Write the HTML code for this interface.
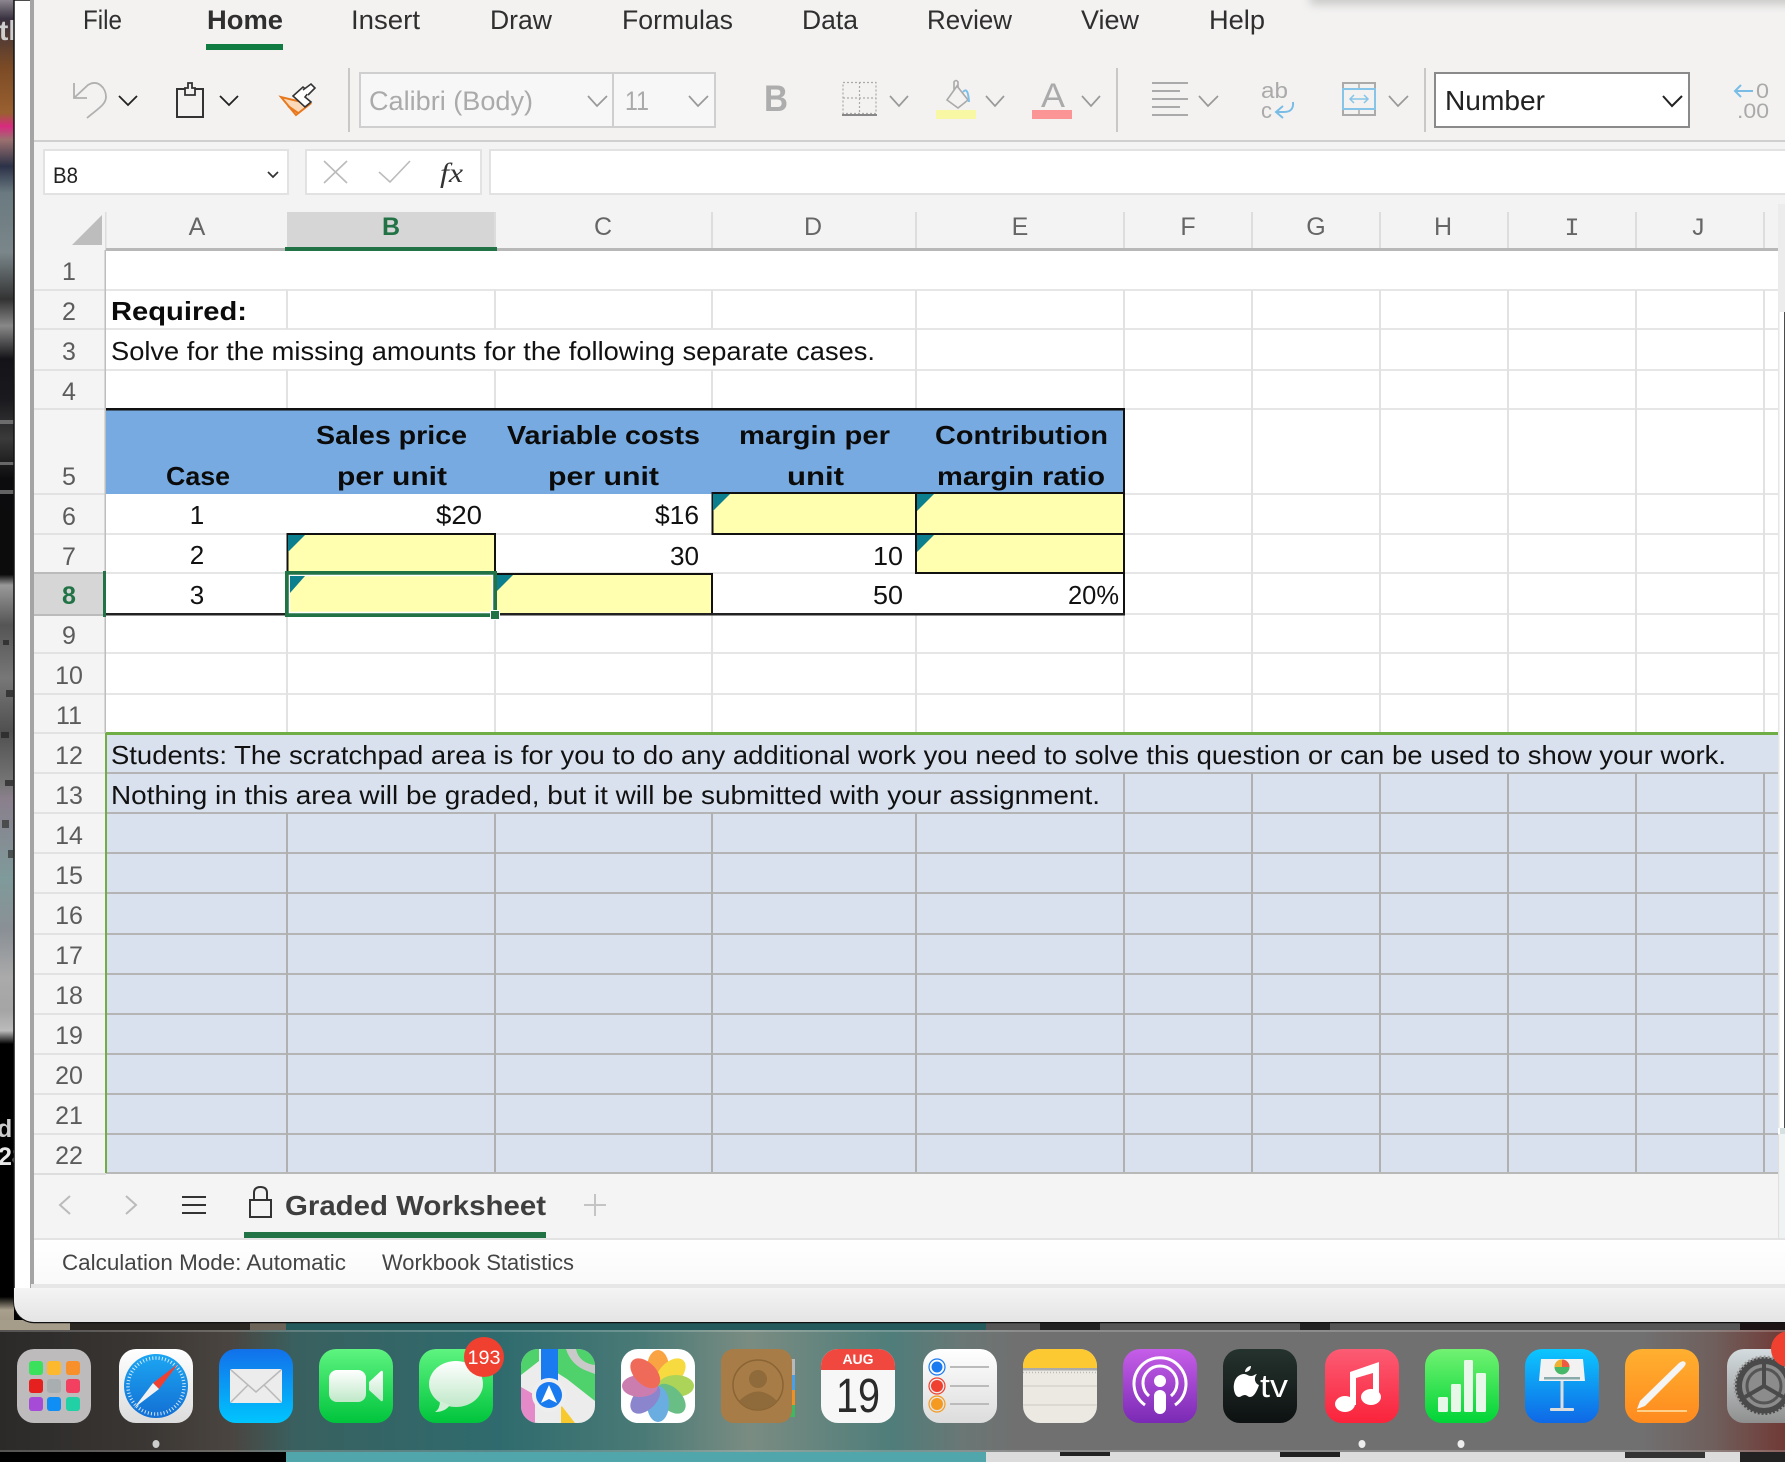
<!DOCTYPE html>
<html lang="en"><head><meta charset="utf-8"><title>Graded Worksheet</title>
<style>
html,body{margin:0;padding:0;background:#000;width:1785px;height:1462px;overflow:hidden}
svg{display:block}
text{font-family:"Liberation Sans",sans-serif}
.t{fill:#111;font-size:26px}
.b{fill:#0b0b0b;font-size:26px;font-weight:bold}
.r{fill:#5c5c5c;font-size:25px;text-anchor:middle}
.c{fill:#666;font-size:25px;text-anchor:middle}
.m{fill:#2f2f2f;font-size:27px}
.g{fill:#aaa;font-size:27px}
.ch{fill:none;stroke:#999;stroke-width:1.7}
.tri{fill:#0c7f8f}
</style></head><body>
<svg width="1785" height="1462" viewBox="0 0 1785 1462" xmlns="http://www.w3.org/2000/svg">
<defs>
<linearGradient id="leftbg" x1="0" y1="0" x2="0" y2="1">
<stop offset="0" stop-color="#8c8790"/><stop offset=".014" stop-color="#3a3240"/><stop offset=".05" stop-color="#7a4a25"/><stop offset=".085" stop-color="#9a6030"/><stop offset=".095" stop-color="#d82a80"/><stop offset=".105" stop-color="#9c7070"/><stop offset=".125" stop-color="#2c3248"/><stop offset=".145" stop-color="#6a7a80"/><stop offset=".19" stop-color="#7a868a"/><stop offset=".225" stop-color="#333"/><stop offset=".245" stop-color="#888"/><stop offset=".27" stop-color="#141418"/><stop offset=".30" stop-color="#1a1a1e"/><stop offset=".33" stop-color="#3a3a3a"/><stop offset=".36" stop-color="#0c0c0e"/><stop offset=".432" stop-color="#0c0c0c"/><stop offset=".44" stop-color="#999"/><stop offset=".47" stop-color="#555"/><stop offset=".51" stop-color="#777"/><stop offset=".55" stop-color="#505050"/><stop offset=".59" stop-color="#777"/><stop offset=".6" stop-color="#8a7f8c"/><stop offset=".66" stop-color="#7f9a9a"/><stop offset=".70" stop-color="#8a9096"/><stop offset=".735" stop-color="#aaa"/><stop offset=".76" stop-color="#a5a5a5"/><stop offset=".775" stop-color="#bbb"/><stop offset=".785" stop-color="#000"/><stop offset=".975" stop-color="#000"/><stop offset=".985" stop-color="#a89f8c"/><stop offset="1" stop-color="#9a9080"/>
</linearGradient>
<linearGradient id="dock" x1="0" y1="0" x2="1785" y2="0" gradientUnits="userSpaceOnUse">
<stop offset="0" stop-color="#2b2a29"/><stop offset=".08" stop-color="#3a3633"/><stop offset=".13" stop-color="#4a4540"/><stop offset=".165" stop-color="#39605f"/><stop offset=".28" stop-color="#2f6b6e"/><stop offset=".36" stop-color="#4a7a76"/><stop offset=".42" stop-color="#7a8c82"/><stop offset=".5" stop-color="#4f7d7a"/><stop offset=".54" stop-color="#6a7775"/><stop offset=".57" stop-color="#707070"/><stop offset=".92" stop-color="#707070"/><stop offset=".96" stop-color="#6f5f5c"/><stop offset="1" stop-color="#703a36"/>
</linearGradient>
<linearGradient id="foot" x1="0" y1="0" x2="0" y2="1"><stop offset="0" stop-color="#f4f4f4"/><stop offset="1" stop-color="#e4e4e4"/></linearGradient>
<linearGradient id="stat" x1="0" y1="0" x2="0" y2="1"><stop offset="0" stop-color="#fff"/><stop offset="1" stop-color="#f9f9f9"/></linearGradient>
<linearGradient id="iWhite" x1="0" y1="0" x2="0" y2="1"><stop offset="0" stop-color="#fff"/><stop offset="1" stop-color="#dcdcdc"/></linearGradient>
<linearGradient id="iSaf" x1="0" y1="0" x2="0" y2="1"><stop offset="0" stop-color="#1ca6f2"/><stop offset="1" stop-color="#136fd4"/></linearGradient>
<linearGradient id="iMail" x1="0" y1="0" x2="0" y2="1"><stop offset="0" stop-color="#1270ea"/><stop offset="1" stop-color="#00c5fe"/></linearGradient>
<linearGradient id="iGreen" x1="0" y1="0" x2="0" y2="1"><stop offset="0" stop-color="#5ef480"/><stop offset="1" stop-color="#00c43c"/></linearGradient>
<linearGradient id="iBub" x1="0" y1="0" x2="0" y2="1"><stop offset="0" stop-color="#fff"/><stop offset="1" stop-color="#bfe8c8"/></linearGradient>
<linearGradient id="iPod" x1="0" y1="0" x2="0" y2="1"><stop offset="0" stop-color="#c65ee8"/><stop offset="1" stop-color="#7a2ab5"/></linearGradient>
<linearGradient id="iTv" x1="0" y1="0" x2="0" y2="1"><stop offset="0" stop-color="#25332e"/><stop offset="1" stop-color="#0d1111"/></linearGradient>
<linearGradient id="iMus" x1="0" y1="0" x2="0" y2="1"><stop offset="0" stop-color="#fb5c74"/><stop offset="1" stop-color="#fa233b"/></linearGradient>
<linearGradient id="iNum" x1="0" y1="0" x2="0" y2="1"><stop offset="0" stop-color="#72f272"/><stop offset="1" stop-color="#00d436"/></linearGradient>
<linearGradient id="iKey" x1="0" y1="0" x2="0" y2="1"><stop offset="0" stop-color="#0dc6fe"/><stop offset="1" stop-color="#0f68e6"/></linearGradient>
<linearGradient id="iPag" x1="0" y1="0" x2="0" y2="1"><stop offset="0" stop-color="#ffb030"/><stop offset="1" stop-color="#ff8a1e"/></linearGradient>
<linearGradient id="iSys" x1="0" y1="0" x2="0" y2="1"><stop offset="0" stop-color="#d4dcdf"/><stop offset="1" stop-color="#8f8f8f"/></linearGradient>
<filter id="blur6" x="-10%" y="-200%" width="120%" height="500%"><feGaussianBlur stdDeviation="5"/></filter>
<clipPath id="winclip"><path d="M14 0H1785V1322H34A20 20 0 0 1 14 1302Z"/></clipPath>
</defs>

<!-- desktop backdrop -->
<rect width="1785" height="1462" fill="#000"/>
<rect x="0" y="0" width="14" height="1330" fill="url(#leftbg)"/>
<g fill="#888" opacity=".7">
<rect x="0" y="420" width="14" height="4"/><rect x="0" y="462" width="14" height="3"/><rect x="0" y="490" width="14" height="4"/>
<rect x="3" y="640" width="6" height="5" fill="#222"/><rect x="6" y="690" width="7" height="7" fill="#222"/><rect x="1" y="732" width="8" height="6" fill="#222"/><rect x="5" y="780" width="8" height="6" fill="#222"/><rect x="2" y="820" width="7" height="8" fill="#333"/><rect x="8" y="850" width="5" height="8" fill="#333"/>
</g>
<text x="-1" y="40" style="font-size:28px;font-weight:bold" fill="#cfcfcf">tl</text>
<text x="-3" y="1137" style="font-size:25px;font-weight:bold" fill="#ccc">d</text>
<text x="-2" y="1165" style="font-size:25px;font-weight:bold" fill="#e8e8e8">28</text>

<!-- strip between window and dock -->
<rect x="0" y="1320" width="286" height="12" fill="#2a2622"/>
<rect x="0" y="1320" width="70" height="12" fill="#a59c8a"/>
<rect x="250" y="1320" width="36" height="12" fill="#6c6458"/>
<rect x="286" y="1320" width="700" height="12" fill="#245a5c"/>
<rect x="986" y="1320" width="799" height="12" fill="#555"/>
<rect x="1040" y="1320" width="60" height="12" fill="#222"/>
<rect x="1300" y="1320" width="30" height="12" fill="#222"/>
<rect x="1740" y="1320" width="45" height="12" fill="#1c1414"/>
<!-- strip below dock -->
<rect x="286" y="1452" width="700" height="10" fill="#50a6aa"/>
<rect x="986" y="1452" width="799" height="10" fill="#dcdcdc"/>
<rect x="1060" y="1452" width="50" height="4" fill="#222"/>
<rect x="1280" y="1452" width="60" height="5" fill="#222"/>
<rect x="1625" y="1452" width="80" height="6" fill="#333"/>
<rect x="1740" y="1452" width="45" height="10" fill="#222"/>

<!-- dock -->
<rect x="0" y="1330" width="1785" height="122" fill="url(#dock)"/>
<rect x="0" y="1330" width="1785" height="2" fill="#fff" opacity=".2"/>
<rect x="0" y="1450" width="1785" height="2" fill="#fff" opacity=".2"/>
<ellipse cx="156" cy="1444" rx="3.5" ry="4" fill="#ccc"/>
<ellipse cx="1362" cy="1444" rx="3.5" ry="4" fill="#eee"/>
<ellipse cx="1461" cy="1444" rx="3.5" ry="4" fill="#eee"/>

<!-- launchpad -->
<g transform="translate(17 1349)">
<rect width="74" height="74" rx="17" fill="#bdbbbb"/>
<rect x="12" y="12" width="14" height="14" rx="3" fill="#3be05c"/><rect x="30" y="12" width="14" height="14" rx="3" fill="#fdb92e"/><rect x="49" y="12" width="14" height="14" rx="3" fill="#f7902a"/>
<rect x="12" y="30" width="14" height="14" rx="3" fill="#e61f1f"/><rect x="30" y="30" width="14" height="14" rx="3" fill="#a9aeb1"/><rect x="49" y="30" width="14" height="14" rx="3" fill="#f33f60"/>
<rect x="12" y="48" width="14" height="14" rx="3" fill="#a64bd8"/><rect x="30" y="48" width="14" height="14" rx="3" fill="#0f8ef5"/><rect x="49" y="48" width="14" height="14" rx="3" fill="#22d0a6"/>
</g>
<!-- safari -->
<g transform="translate(119 1349)">
<rect width="74" height="74" rx="17" fill="url(#iWhite)"/>
<circle cx="37" cy="37" r="32" fill="url(#iSaf)"/>
<circle cx="37" cy="37" r="28" fill="none" stroke="#fff" stroke-width="3.5" stroke-dasharray="1 2.2" opacity=".8"/>
<path d="M34 34 L59 15 L40 40Z" fill="#f04030"/>
<path d="M34 34 L15 59 L40 40Z" fill="#f2f2f2"/>
</g>
<!-- mail -->
<g transform="translate(219 1349)">
<rect width="74" height="74" rx="17" fill="url(#iMail)"/>
<rect x="11" y="20" width="52" height="34" rx="2" fill="#ececec"/>
<path d="M12 21 L37 43 L62 21 M12 53 L29 36 M62 53 L45 36" fill="none" stroke="#b9b9b9" stroke-width="1.5"/>
</g>
<!-- facetime -->
<g transform="translate(319 1349)">
<rect width="74" height="74" rx="17" fill="url(#iGreen)"/>
<rect x="10" y="21" width="37" height="32" rx="8" fill="url(#iBub)"/>
<path d="M50 33 L62 22 Q64 21 64 24 V50 Q64 53 62 52 L50 41Z" fill="url(#iBub)"/>
</g>
<!-- messages -->
<g transform="translate(419 1349)">
<rect width="74" height="74" rx="17" fill="url(#iGreen)"/>
<ellipse cx="37" cy="35" rx="27" ry="23" fill="url(#iBub)"/>
<path d="M21 52 Q21 60 16 63 Q26 63 31 56Z" fill="#d0efd6"/>
</g>
<circle cx="484" cy="1357" r="20" fill="#f04030"/>
<text x="484" y="1364" text-anchor="middle" fill="#fff" style="font-size:19px" textLength="33" lengthAdjust="spacingAndGlyphs">193</text>
<!-- maps -->
<g transform="translate(521 1349)">
<clipPath id="mapc"><rect width="74" height="74" rx="17"/></clipPath>
<g clip-path="url(#mapc)">
<rect width="74" height="74" fill="#ececec"/>
<path d="M30 0H74V52L46 30 30 20Z" fill="#4fd26b"/>
<path d="M0 0H18V12L0 26Z" fill="#4fd26b"/>
<path d="M0 38L14 46V74H0Z" fill="#e58ac8"/>
<path d="M40 56L54 74H40Z" fill="#f8c92e"/>
<path d="M45 0 Q50 16 66 22 L74 25 V16 Q58 14 55 0Z" fill="#c9c9c9"/>
<rect x="20" y="0" width="17" height="34" fill="#1a7bf0"/>
<circle cx="28" cy="46" r="17" fill="#eee"/>
<circle cx="28" cy="46" r="13" fill="#1a7bf0"/>
<path d="M28 36 L36 54 L28 50 L20 54Z" fill="#fff"/>
</g></g>
<!-- photos -->
<g transform="translate(621 1349)">
<rect width="74" height="74" rx="17" fill="#fff"/>
<g transform="translate(37 37)" opacity=".9">
<ellipse cx="0" cy="-18" rx="11" ry="18" fill="#f99a2e"/>
<ellipse cx="0" cy="-18" rx="11" ry="18" fill="#f6d72c" transform="rotate(45)"/>
<ellipse cx="0" cy="-18" rx="11" ry="18" fill="#a4d048" transform="rotate(90)"/>
<ellipse cx="0" cy="-18" rx="11" ry="18" fill="#58b878" transform="rotate(135)"/>
<ellipse cx="0" cy="-18" rx="11" ry="18" fill="#5aa5dd" transform="rotate(180)"/>
<ellipse cx="0" cy="-18" rx="11" ry="18" fill="#7f78c8" transform="rotate(225)"/>
<ellipse cx="0" cy="-18" rx="11" ry="18" fill="#c670a8" transform="rotate(270)"/>
<ellipse cx="0" cy="-18" rx="11" ry="18" fill="#ee5a48" transform="rotate(315)"/>
</g></g>
<!-- contacts -->
<g transform="translate(721 1349)">
<rect x="60" y="10" width="14" height="16" fill="#b9b9b9"/><rect x="60" y="26" width="14" height="15" fill="#4aa0e8"/><rect x="60" y="41" width="14" height="15" fill="#f09020"/><rect x="60" y="56" width="14" height="12" fill="#40b860"/>
<rect width="71" height="74" rx="13" fill="#a87c46"/>
<circle cx="37" cy="36" r="25" fill="none" stroke="#8a6434" stroke-width="1.5"/>
<circle cx="37" cy="30" r="9" fill="#8f6a3a"/>
<path d="M18 52 Q37 33 56 52 A25 25 0 0 1 18 52Z" fill="#8f6a3a"/>
</g>
<!-- calendar -->
<g transform="translate(821 1349)">
<rect width="74" height="74" rx="17" fill="#f7f7f7"/>
<path d="M0 21V17A17 17 0 0 1 17 0H57A17 17 0 0 1 74 17V21Z" fill="#f0483e"/>
<text x="37" y="15" text-anchor="middle" fill="#fff" style="font-size:14px;font-weight:bold">AUG</text>
<text x="37" y="63" text-anchor="middle" fill="#2a2a2a" style="font-size:48px" textLength="44" lengthAdjust="spacingAndGlyphs">19</text>
</g>
<!-- reminders -->
<g transform="translate(923 1349)">
<rect width="74" height="74" rx="17" fill="url(#iWhite)"/>
<circle cx="14" cy="18" r="6" fill="#1a7bf0" stroke="#fff" stroke-width="1"/><circle cx="14" cy="18" r="8" fill="none" stroke="#1a7bf0" stroke-width="1.2"/>
<circle cx="14" cy="37" r="6" fill="#f04030"/><circle cx="14" cy="37" r="8" fill="none" stroke="#f04030" stroke-width="1.2"/>
<circle cx="14" cy="55" r="6" fill="#f59a20"/><circle cx="14" cy="55" r="8" fill="none" stroke="#f59a20" stroke-width="1.2"/>
<path d="M27 18H66M27 37H66M27 55H66" stroke="#bbb" stroke-width="2"/>
</g>
<!-- notes -->
<g transform="translate(1023 1349)">
<rect width="74" height="74" rx="17" fill="#ece9e3"/>
<path d="M0 19V17A17 17 0 0 1 17 0H57A17 17 0 0 1 74 17V19Z" fill="#fdc933"/>
<rect y="19" width="74" height="2.500" fill="#aaa"/>
<path d="M0 23.500H74" stroke="#bbb" stroke-width="1.500" stroke-dasharray="1 2"/>
<path d="M0 37H74M0 56H74" stroke="#d6d3cd" stroke-width="1.500"/>
</g>
<!-- podcasts -->
<g transform="translate(1123 1349)">
<rect width="74" height="74" rx="17" fill="url(#iPod)"/>
<g fill="none" stroke="#fff" stroke-width="3"><path d="M22 56A26 26 0 1 1 52 56"/><path d="M26 47A17 17 0 1 1 48 47"/></g>
<circle cx="37" cy="32" r="6" fill="#fff"/>
<rect x="31" y="41" width="12" height="24" rx="6" fill="#fff"/>
</g>
<!-- tv -->
<g transform="translate(1223 1349)">
<rect width="74" height="74" rx="17" fill="url(#iTv)"/>
<path d="M21 25C24 25 25 27 28 27C31 27 32 25 34 25C31 28 31 34 36 36C34 42 31 48 27 48C25 48 24 46 22 46C19 46 18 48 16 48C12 48 10 40 11 35C12 28 17 25 21 25ZM22 23C22 20 25 17 28 17C28 21 25 23 22 23Z" fill="#fff"/>
<text x="37" y="48" fill="#fff" style="font-size:32px" textLength="28" lengthAdjust="spacingAndGlyphs">tv</text>
</g>
<!-- music -->
<g transform="translate(1325 1349)">
<rect width="74" height="74" rx="17" fill="url(#iMus)"/>
<path d="M25 23L54 13V48H48V24L31 29V56H25Z" fill="#fff"/>
<ellipse cx="20" cy="55" rx="10" ry="8" fill="#fff"/><ellipse cx="46" cy="48" rx="10" ry="8" fill="#fff"/>
</g>
<!-- numbers -->
<g transform="translate(1425 1349)">
<rect width="74" height="74" rx="17" fill="url(#iNum)"/>
<rect x="13" y="48" width="10" height="15" rx="1.500" fill="#e8f8e8"/><rect x="26" y="35" width="10" height="28" rx="1.500" fill="#e8f8e8"/><rect x="39" y="11" width="9" height="52" rx="1.500" fill="#e8f8e8"/><rect x="51" y="24" width="10" height="39" rx="1.500" fill="#e8f8e8"/>
</g>
<!-- keynote -->
<g transform="translate(1525 1349)">
<rect width="74" height="74" rx="17" fill="url(#iKey)"/>
<path d="M16 10H58L60 32H14Z" fill="#f2f2f2"/>
<rect x="19" y="28" width="36" height="2.500" fill="#8aa"/>
<circle cx="37" cy="18" r="7.500" fill="#46b868"/><path d="M37 18V10.500A7.500 7.500 0 0 1 44.500 18Z" fill="#f05a40"/><path d="M37 18H29.500A7.500 7.500 0 0 1 37 10.500Z" fill="#f0b030"/>
<rect x="35.500" y="32" width="3" height="27" fill="#ddd"/><rect x="25" y="59" width="24" height="3" rx="1" fill="#ddd"/>
</g>
<!-- pages -->
<g transform="translate(1625 1349)">
<rect width="74" height="74" rx="17" fill="url(#iPag)"/>
<path d="M12 60L15 52 54 14Q58 11 60 13Q62 15 58 19L20 57Z" fill="#f4f4f4"/>
<path d="M12 62H62" stroke="#ffd08a" stroke-width="2"/>
</g>
<!-- system prefs -->
<g transform="translate(1727 1349)">
<rect width="74" height="74" rx="17" fill="url(#iSys)"/>
<circle cx="37" cy="37" r="29" fill="#4a4a4a"/>
<circle cx="37" cy="37" r="29" fill="none" stroke="#999" stroke-width="3" stroke-dasharray="2 2"/>
<circle cx="37" cy="37" r="22" fill="#8c8c8c"/>
<circle cx="37" cy="37" r="17" fill="none" stroke="#555" stroke-width="3"/>
<path d="M37 37V15M37 37L18 48M37 37L56 48" stroke="#4a4a4a" stroke-width="4"/>
</g>
<circle cx="1789" cy="1349" r="18" fill="#f04030"/>

<!-- WINDOW -->
<path d="M14 0H1785V1322.500H34A20 20 0 0 1 14 1302.500Z" fill="#fff" stroke="#111" stroke-width="1.500"/>
<g clip-path="url(#winclip)">
<rect x="14" y="1288" width="1771" height="34" fill="url(#foot)"/>
</g>
<rect x="30" y="0" width="4" height="1288" fill="#a4a4a4"/>

<!-- ribbon -->
<rect x="34" y="0" width="1751" height="140" fill="#f3f2f1"/>
<rect x="1310" y="-8" width="500" height="12" fill="#c4c4c4" filter="url(#blur6)"/>
<rect x="34" y="140" width="1751" height="2" fill="#cfcfcf"/>
<rect x="34" y="142" width="1751" height="108" fill="#f3f3f3"/>

<text x="83" y="29" class="m" textLength="39" lengthAdjust="spacingAndGlyphs">File</text>
<text x="207" y="29" class="m" style="font-weight:bold" textLength="76" lengthAdjust="spacingAndGlyphs">Home</text>
<rect x="206" y="44" width="77" height="6" fill="#107c41"/>
<text x="351" y="29" class="m" textLength="69" lengthAdjust="spacingAndGlyphs">Insert</text>
<text x="490" y="29" class="m" textLength="62" lengthAdjust="spacingAndGlyphs">Draw</text>
<text x="622" y="29" class="m" textLength="111" lengthAdjust="spacingAndGlyphs">Formulas</text>
<text x="802" y="29" class="m" textLength="56" lengthAdjust="spacingAndGlyphs">Data</text>
<text x="927" y="29" class="m" textLength="85" lengthAdjust="spacingAndGlyphs">Review</text>
<text x="1081" y="29" class="m" textLength="58" lengthAdjust="spacingAndGlyphs">View</text>
<text x="1209" y="29" class="m" textLength="56" lengthAdjust="spacingAndGlyphs">Help</text>

<!-- undo -->
<path d="M74 83V98H87M74 98L88 85C98 79 106 88 106 97C106 105 96 110 87 118" fill="none" stroke="#b0b0b0" stroke-width="1.800"/>
<path d="M119 96L128 105L137 96" fill="none" stroke="#222" stroke-width="1.800"/>
<!-- clipboard -->
<path d="M185 89H177V117H203V89H195" fill="none" stroke="#333" stroke-width="2"/>
<path d="M185 95V88H188V83H192V88H195V95Z" fill="none" stroke="#333" stroke-width="1.800"/>
<path d="M220 96L229 105L238 96" fill="none" stroke="#222" stroke-width="1.800"/>
<!-- format painter -->
<path d="M281 97L296 115L310 104Z" fill="#fbd9b8" stroke="#e8781e" stroke-width="2"/>
<path d="M288 106L298 113" stroke="#e8781e" stroke-width="2"/>
<path d="M293 96L303 87L309 92L305 97L311 102L305 107Z" fill="#fff" stroke="#333" stroke-width="1.600"/>
<path d="M303 90L311 84L315 88L308 95" fill="#fff" stroke="#333" stroke-width="1.600"/>
<rect x="348" y="68" width="2" height="64" fill="#c8c8c8"/>
<!-- font box -->
<rect x="360" y="73" width="355" height="54" fill="#f7f7f7" stroke="#cfcfcf" stroke-width="2"/>
<rect x="612" y="73" width="2" height="54" fill="#cfcfcf"/>
<text x="369" y="110" class="g" textLength="164" lengthAdjust="spacingAndGlyphs">Calibri (Body)</text>
<path d="M588 96L597 106L607 96" class="ch"/>
<text x="625" y="110" class="g" textLength="24" lengthAdjust="spacingAndGlyphs">11</text>
<path d="M689 96L698 106L708 96" class="ch"/>
<text x="764" y="111" fill="#adadad" style="font-size:37px;font-weight:bold" textLength="24" lengthAdjust="spacingAndGlyphs">B</text>
<!-- borders -->
<rect x="843" y="82.500" width="33" height="31" fill="none" stroke="#aaa" stroke-width="1.200" stroke-dasharray="2 2"/>
<path d="M859.500 82V114M843 98H876" stroke="#aaa" stroke-width="1.200" stroke-dasharray="2 2"/>
<rect x="842" y="114" width="35" height="2" fill="#888"/>
<path d="M890 96L899 106L908 96" class="ch"/>
<!-- fill color -->
<path d="M947 100L957 86L968 100L958 108Z M954 90V82Q956 79 958 82V88" fill="none" stroke="#aaa" stroke-width="1.600"/>
<path d="M963 92Q968 86 969 102" fill="none" stroke="#7fbfe8" stroke-width="2"/>
<rect x="936" y="110" width="40" height="9" fill="#f8f8a4"/>
<path d="M986 96L995 106L1004 96" class="ch"/>
<text x="1041" y="107" fill="#aaa" style="font-size:34px" textLength="24" lengthAdjust="spacingAndGlyphs">A</text>
<rect x="1032" y="110" width="40" height="9" fill="#fb9595"/>
<path d="M1082 96L1091 106L1100 96" class="ch"/>
<rect x="1116" y="68" width="2" height="64" fill="#c8c8c8"/>
<!-- align -->
<path d="M1152 83H1188M1152 91H1180M1152 99H1188M1152 107H1180M1152 115H1188" stroke="#aaa" stroke-width="2"/>
<path d="M1199 96L1208 106L1218 96" class="ch"/>
<!-- wrap -->
<text x="1261" y="98" fill="#aaa" style="font-size:22px" textLength="27" lengthAdjust="spacingAndGlyphs">ab</text>
<text x="1261" y="118" fill="#aaa" style="font-size:22px" textLength="11" lengthAdjust="spacingAndGlyphs">c</text>
<path d="M1293 102Q1294 112 1284 112H1277M1283 106L1276 112L1283 118" fill="none" stroke="#79bde6" stroke-width="2"/>
<!-- merge -->
<rect x="1343" y="83" width="32" height="32" fill="none" stroke="#aaa" stroke-width="2"/>
<path d="M1359 83V115" stroke="#aaa" stroke-width="1.500"/>
<rect x="1343" y="89" width="32" height="20" fill="#f3f2f1" stroke="#86c4e8" stroke-width="2"/>
<path d="M1350 99H1368M1354 95L1350 99L1354 103M1364 95L1368 99L1364 103" fill="none" stroke="#86c4e8" stroke-width="1.500"/>
<path d="M1389 96L1398 106L1408 96" class="ch"/>
<rect x="1424" y="68" width="2" height="64" fill="#c8c8c8"/>
<!-- number box -->
<rect x="1435" y="73" width="254" height="54" fill="#fff" stroke="#8a8a8a" stroke-width="2"/>
<text x="1445" y="110" fill="#222" style="font-size:28px" textLength="100" lengthAdjust="spacingAndGlyphs">Number</text>
<path d="M1663 96L1672 106L1682 96" fill="none" stroke="#222" stroke-width="2"/>
<path d="M1735 91H1753M1741 85L1735 91L1741 97" fill="none" stroke="#79bde6" stroke-width="2"/>
<text x="1756" y="98" fill="#aaa" style="font-size:21px" textLength="13" lengthAdjust="spacingAndGlyphs">0</text>
<text x="1737" y="118" fill="#aaa" style="font-size:21px" textLength="32" lengthAdjust="spacingAndGlyphs">.00</text>

<!-- formula bar -->
<rect x="44" y="150" width="244" height="44" fill="#fff" stroke="#e2e2e2" stroke-width="2"/>
<text x="53" y="183" fill="#222" style="font-size:22px" textLength="25" lengthAdjust="spacingAndGlyphs">B8</text>
<path d="M268 172L273 177L278 172" fill="none" stroke="#333" stroke-width="1.700"/>
<rect x="306" y="150" width="175" height="44" fill="#fff" stroke="#e2e2e2" stroke-width="2"/>
<path d="M324 161L347 183M347 161L324 183" stroke="#bbb" stroke-width="1.600"/>
<path d="M379 172L390 182L410 161" fill="none" stroke="#bbb" stroke-width="1.600"/>
<text x="440" y="182" fill="#333" style="font-family:'Liberation Serif',serif;font-size:27px;font-style:italic" textLength="23" lengthAdjust="spacingAndGlyphs">fx</text>
<rect x="490" y="150" width="1297" height="44" fill="#fff" stroke="#e2e2e2" stroke-width="2"/>

<!-- column headers -->
<rect x="34" y="250" width="72" height="923" fill="#f4f4f4"/>
<path d="M72 245H102V215Z" fill="#bdbdbd"/>
<rect x="105" y="212" width="1.500" height="38" fill="#ddd"/>
<rect x="287" y="212" width="208" height="37" fill="#d6d6d6"/>
<path d="M495 212V249M712 212V249M916 212V249M1124 212V249M1252 212V249M1380 212V249M1508 212V249M1636 212V249M1764 212V249" stroke="#ddd" stroke-width="2"/>
<rect x="106" y="248" width="1672" height="3" fill="#b8b8b8"/>
<rect x="285" y="247" width="212" height="4" fill="#217346"/>
<text x="197" y="235" class="c">A</text>
<text x="391" y="235" class="c" style="font-weight:bold;fill:#217346">B</text>
<text x="603" y="235" class="c">C</text>
<text x="813" y="235" class="c">D</text>
<text x="1020" y="235" class="c">E</text>
<text x="1188" y="235" class="c">F</text>
<text x="1316" y="235" class="c">G</text>
<text x="1443" y="235" class="c">H</text>
<text x="1572" y="235" style="fill:#666;font-size:25px;text-anchor:middle;font-family:'Liberation Mono',monospace">I</text>
<text x="1698" y="235" style="fill:#666;font-size:25px;text-anchor:middle;font-family:'Liberation Mono',monospace">J</text>

<!-- scrollbar -->
<rect x="1778" y="204" width="7" height="108" fill="#ececec"/>
<rect x="1778" y="312" width="1.500" height="816" fill="#e6e6e6"/>
<rect x="1780" y="1128" width="5" height="6" fill="#d6e0e0"/>
<rect x="1780" y="1134" width="5" height="104" fill="#f0f3f3"/>

<!-- row header separators -->
<path d="M34 290H105M34 329H105M34 370H105M34 409H105M34 494H105M34 534H105M34 573H105M34 653H105M34 694H105M34 733H105M34 773H105M34 813H105M34 853H105M34 893H105M34 934H105M34 974H105M34 1014H105M34 1054H105M34 1094H105M34 1134H105" stroke="#e2e2e2" stroke-width="2"/>
<rect x="34" y="574" width="69" height="40" fill="#d6d6d6"/>
<rect x="34" y="572" width="69" height="2" fill="#bbb"/><rect x="34" y="614" width="69" height="2" fill="#bbb"/>
<rect x="104.500" y="250" width="2" height="483" fill="#bdbdbd"/>
<text x="69" y="280" class="r">1</text><text x="69" y="320" class="r">2</text><text x="69" y="360" class="r">3</text><text x="69" y="400" class="r">4</text><text x="69" y="485" class="r">5</text><text x="69" y="525" class="r">6</text><text x="69" y="565" class="r">7</text>
<text x="69" y="604" class="r" style="font-weight:bold;fill:#217346">8</text>
<text x="69" y="644" class="r">9</text><text x="69" y="684" class="r">10</text><text x="69" y="724" class="r">11</text><text x="69" y="764" class="r">12</text><text x="69" y="804" class="r">13</text><text x="69" y="844" class="r">14</text><text x="69" y="884" class="r">15</text><text x="69" y="924" class="r">16</text><text x="69" y="964" class="r">17</text><text x="69" y="1004" class="r">18</text><text x="69" y="1044" class="r">19</text><text x="69" y="1084" class="r">20</text><text x="69" y="1124" class="r">21</text><text x="69" y="1164" class="r">22</text>

<!-- white grid -->
<rect x="106" y="251" width="1672" height="482" fill="#fff"/>
<path d="M106 290H1778M106 329H1778M106 370H1778M106 409H1778M1124 494H1778M106 534H1778M106 573H1778M1124 614H1778M106 653H1778M106 694H1778" stroke="#e6e6e6" stroke-width="2"/>
<!-- verticals -->
<path d="M287 290V329M495 290V329M712 290V329M916 290V409M1124 290V409M1252 290V733M1380 290V733M1508 290V733M1636 290V733M1764 290V733M287 370V409M495 370V409M712 370V409M287 614V733M495 614V733M712 614V733M916 614V733M1124 614V733" stroke="#e2e2e2" stroke-width="2"/>

<!-- required -->
<text x="111" y="320" class="b" textLength="136" lengthAdjust="spacingAndGlyphs">Required:</text>
<text x="111" y="360" class="t" textLength="764" lengthAdjust="spacingAndGlyphs">Solve for the missing amounts for the following separate cases.</text>

<!-- table header -->
<rect x="106" y="410" width="1018" height="84" fill="#77aae0"/>
<rect x="106" y="408" width="1019" height="2.500" fill="#111"/>
<text x="316" y="444" class="b" textLength="151" lengthAdjust="spacingAndGlyphs">Sales price</text>
<text x="337" y="485" class="b" textLength="110" lengthAdjust="spacingAndGlyphs">per unit</text>
<text x="166" y="485" class="b" textLength="64" lengthAdjust="spacingAndGlyphs">Case</text>
<text x="507" y="444" class="b" textLength="193" lengthAdjust="spacingAndGlyphs">Variable costs</text>
<text x="548" y="485" class="b" textLength="111" lengthAdjust="spacingAndGlyphs">per unit</text>
<text x="739" y="444" class="b" textLength="151" lengthAdjust="spacingAndGlyphs">margin per</text>
<text x="787" y="485" class="b" textLength="57" lengthAdjust="spacingAndGlyphs">unit</text>
<text x="935" y="444" class="b" textLength="173" lengthAdjust="spacingAndGlyphs">Contribution</text>
<text x="937" y="485" class="b" textLength="168" lengthAdjust="spacingAndGlyphs">margin ratio</text>

<!-- yellow cells -->
<g fill="#ffffaf" stroke="#111" stroke-width="2">
<rect x="712.500" y="493" width="203.500" height="41"/>
<rect x="916" y="493" width="208" height="41"/>
<rect x="287.500" y="534" width="207.500" height="40"/>
<rect x="916" y="534" width="208" height="39"/>
<rect x="287.500" y="574" width="207.500" height="40"/>
<rect x="495" y="574" width="217" height="40"/>
</g>
<rect x="1123" y="408" width="2" height="206" fill="#111"/>
<rect x="106" y="613" width="1019" height="2.500" fill="#222"/>
<path d="M713 494H730L713 511Z" class="tri"/>
<path d="M917 494H934L917 511Z" class="tri"/>
<path d="M288 535H305L288 552Z" class="tri"/>
<path d="M917 535H934L917 552Z" class="tri"/>
<path d="M496 575H513L496 592Z" class="tri"/>
<!-- selection -->
<rect x="287" y="573" width="208" height="42" fill="none" stroke="#217346" stroke-width="4"/>
<rect x="289.500" y="575.500" width="203" height="37" fill="none" stroke="#fff" stroke-width="1.500"/>
<path d="M290 576H305L290 593Z" class="tri"/>
<rect x="490" y="610" width="10" height="10" fill="#fff"/>
<rect x="491" y="611" width="8" height="8" fill="#217346"/>
<rect x="103" y="571" width="3" height="46" fill="#217346"/>

<!-- data -->
<text x="197" y="524" class="t" text-anchor="middle">1</text>
<text x="197" y="564" class="t" text-anchor="middle">2</text>
<text x="197" y="604" class="t" text-anchor="middle">3</text>
<text x="436" y="524" class="t" textLength="46" lengthAdjust="spacingAndGlyphs">$20</text>
<text x="655" y="524" class="t" textLength="44" lengthAdjust="spacingAndGlyphs">$16</text>
<text x="670" y="565" class="t" textLength="29" lengthAdjust="spacingAndGlyphs">30</text>
<text x="873" y="565" class="t" textLength="30" lengthAdjust="spacingAndGlyphs">10</text>
<text x="873" y="604" class="t" textLength="30" lengthAdjust="spacingAndGlyphs">50</text>
<text x="1068" y="604" class="t" textLength="51" lengthAdjust="spacingAndGlyphs">20%</text>

<!-- scratchpad -->
<rect x="106" y="733" width="1672" height="440" fill="#d9e1ef"/>
<path d="M106 773H1778M106 813H1778M106 853H1778M106 893H1778M106 934H1778M106 974H1778M106 1014H1778M106 1054H1778M106 1094H1778M106 1134H1778" stroke="#b4b4b4" stroke-width="2"/>
<path d="M287 813V1173M495 813V1173M712 813V1173M916 813V1173M1124 773V1173M1252 773V1173M1380 773V1173M1508 773V1173M1636 773V1173M1764 773V1173" stroke="#b0b0b0" stroke-width="2"/>
<rect x="106" y="1172" width="1672" height="2" fill="#b8b8b8"/>
<rect x="106" y="732" width="1672" height="3" fill="#70ad47"/>
<rect x="105" y="733" width="2" height="440" fill="#70ad47"/>
<text x="111" y="764" class="t" textLength="1615" lengthAdjust="spacingAndGlyphs">Students: The scratchpad area is for you to do any additional work you need to solve this question or can be used to show your work.</text>
<text x="111" y="804" class="t" textLength="989" lengthAdjust="spacingAndGlyphs">Nothing in this area will be graded, but it will be submitted with your assignment.</text>

<!-- tab bar -->
<rect x="34" y="1174" width="1744" height="64" fill="#f4f4f4"/>
<rect x="34" y="1173" width="72" height="2" fill="#ddd"/>
<rect x="1778" y="1134" width="1.500" height="104" fill="#e0e0e0"/>
<path d="M70 1196L60 1205L70 1214" fill="none" stroke="#bbb" stroke-width="2"/>
<path d="M126 1196L136 1205L126 1214" fill="none" stroke="#bbb" stroke-width="2"/>
<path d="M182 1197H206M182 1205H206M182 1213H206" stroke="#333" stroke-width="2"/>
<rect x="250" y="1200" width="21" height="17" fill="none" stroke="#333" stroke-width="2"/>
<path d="M254 1200V1193Q254 1187 260.500 1187Q267 1187 267 1193V1200" fill="none" stroke="#333" stroke-width="2"/>
<text x="285" y="1215" fill="#3e3e3e" style="font-size:28px;font-weight:bold" textLength="261" lengthAdjust="spacingAndGlyphs">Graded Worksheet</text>
<rect x="244" y="1232" width="302" height="6" fill="#217346"/>
<path d="M584 1205H606M595 1194V1216" stroke="#c4c4c4" stroke-width="2"/>
<rect x="34" y="1238" width="1751" height="2" fill="#e3e3e3"/>

<!-- status -->
<rect x="34" y="1240" width="1751" height="44" fill="url(#stat)"/>
<text x="62" y="1270" fill="#444" style="font-size:22px" textLength="284" lengthAdjust="spacingAndGlyphs">Calculation Mode: Automatic</text>
<text x="382" y="1270" fill="#444" style="font-size:22px" textLength="192" lengthAdjust="spacingAndGlyphs">Workbook Statistics</text>
<rect x="31" y="1284" width="1754" height="4" fill="#e6e6e6"/>
</svg>
</body></html>
